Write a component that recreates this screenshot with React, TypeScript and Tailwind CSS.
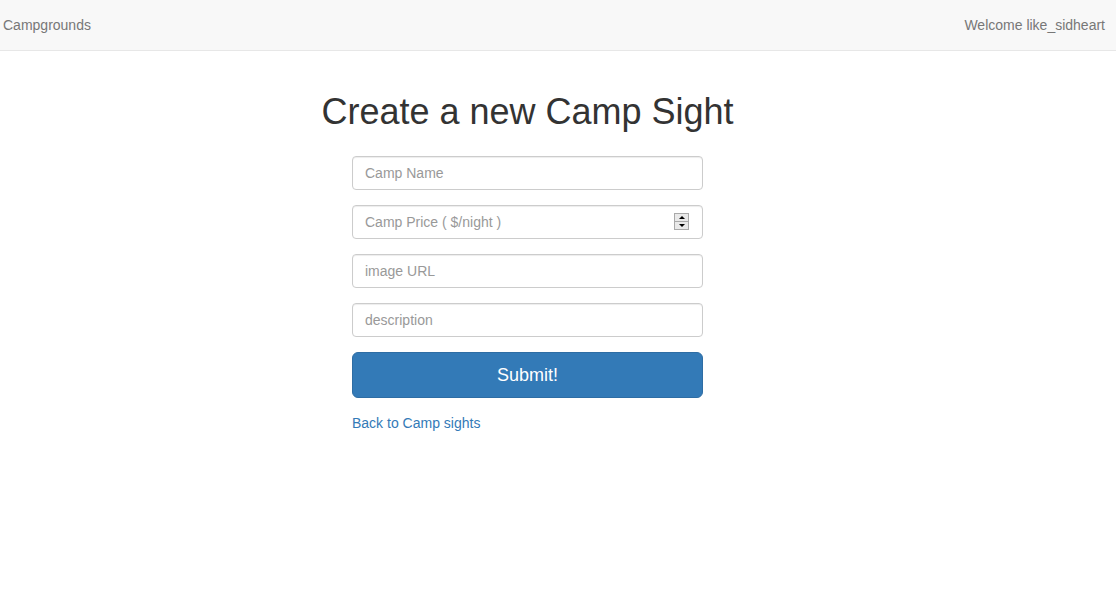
import React from "react";

export default function App() {
  const font = { fontFamily: '"Liberation Sans", Arial, Helvetica, sans-serif' };
  const inputCls =
    "block w-full h-[34px] px-3 py-[6px] text-[14px] leading-[20px] text-[#555] bg-white border border-[#ccc] rounded-[4px] shadow-[inset_0_1px_1px_rgba(0,0,0,0.075)] placeholder:text-[#999] outline-none";
  return (
    <div style={font} className="min-h-[602px] bg-white text-[14px] text-[#333]">
      <nav className="h-[51px] bg-[#f8f8f8] border-b border-[#e7e7e7] flex items-center justify-between pl-[3px] pr-[11px]">
        <a className="text-[#777] text-[14px]">Campgrounds</a>
        <span className="text-[#777] text-[14px]">Welcome like_sidheart</span>
      </nav>
      <div className="w-[1055px] flex flex-col items-center">
        <h1 className="mt-[41px] text-[36px] leading-[40px] font-normal text-[#333] whitespace-nowrap">
          Create a new Camp Sight
        </h1>
        <form className="w-[351px] mt-[24px] flex flex-col gap-[15px]" onSubmit={(e) => e.preventDefault()}>
          <input className={inputCls} placeholder="Camp Name" />
          <div className="relative">
            <input className={inputCls} placeholder="Camp Price ( $/night )" />
            <div className="absolute left-[322px] top-[8px] w-[15px] h-[17px] flex flex-col border border-[#a9a9a9] bg-[#e9e9e9]">
              <div className="flex-1 flex items-center justify-center border-b border-[#a9a9a9]">
                <div className="w-0 h-0 border-l-[3px] border-r-[3px] border-b-[3px] border-l-transparent border-r-transparent border-b-black" />
              </div>
              <div className="flex-1 flex items-center justify-center">
                <div className="w-0 h-0 border-l-[3px] border-r-[3px] border-t-[3px] border-l-transparent border-r-transparent border-t-black" />
              </div>
            </div>
          </div>
          <input className={inputCls} placeholder="image URL" />
          <input className={inputCls} placeholder="description" />
          <button
            type="submit"
            className="h-[46px] w-full bg-[#337ab7] border border-[#2e6da4] rounded-[6px] text-white text-[18px] leading-[24px]"
          >
            Submit!
          </button>
        </form>
        <div className="w-[351px] mt-[15px]">
          <a className="text-[#337ab7] text-[14px] leading-[20px]">Back to Camp sights</a>
        </div>
      </div>
    </div>
  );
}
